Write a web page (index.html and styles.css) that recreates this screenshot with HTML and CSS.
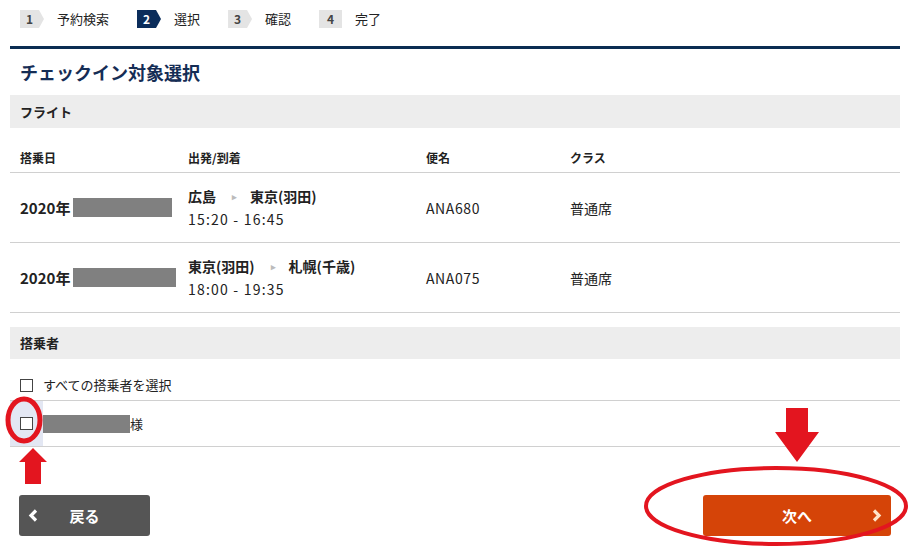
FILE: index.html
```html
<!DOCTYPE html>
<html lang="ja">

<head>
    <meta charset="UTF-8">
    <title>チェックイン対象選択</title>
    <link rel="stylesheet" href="styles.css">
</head>

<body>
    <div class="page">

        <ol class="steps">
            <li><span class="num">1</span><span class="label">予約検索</span></li>
            <li class="active"><span class="num">2</span><span class="label">選択</span></li>
            <li><span class="num">3</span><span class="label">確認</span></li>
            <li class="last"><span class="num">4</span><span class="label">完了</span></li>
        </ol>

        <h1 class="title">チェックイン対象選択</h1>

        <h2 class="section-head">フライト</h2>
        <div class="flights">
            <div class="row head">
                <div>搭乗日</div>
                <div>出発/到着</div>
                <div>便名</div>
                <div>クラス</div>
            </div>
            <div class="row">
                <div class="date">2020年<span class="mask" style="width: 99px"></span></div>
                <div>
                    <div class="route">広島<span class="tri">&#9656;</span>東京(羽田)</div>
                    <div class="time">15:20 - 16:45</div>
                </div>
                <div class="code">ANA680</div>
                <div>普通席</div>
            </div>
            <div class="row">
                <div class="date">2020年<span class="mask" style="width: 103px"></span></div>
                <div>
                    <div class="route">東京(羽田)<span class="tri">&#9656;</span>札幌(千歳)</div>
                    <div class="time">18:00 - 19:35</div>
                </div>
                <div class="code">ANA075</div>
                <div>普通席</div>
            </div>
        </div>

        <h2 class="section-head second">搭乗者</h2>
        <div class="check-all">
            <span class="box"></span>すべての搭乗者を選択
        </div>
        <div class="passenger">
            <div class="pick"><span class="box"></span></div>
            <span class="mask" style="width: 87px"></span>様
        </div>

        <div class="buttons">
            <a class="btn back" href="#">
                <svg class="chev" width="10" height="13" viewBox="0 0 10 13">
                    <polyline points="8,1.5 3,6.5 8,11.5" fill="none" stroke="#fff" stroke-width="3.2" />
                </svg>戻る</a>
            <a class="btn next" href="#">次へ<svg class="chev" width="10" height="13" viewBox="0 0 10 13">
                    <polyline points="2,1.5 7,6.5 2,11.5" fill="none" stroke="#ffe4c8" stroke-width="3.2" />
                </svg></a>
        </div>

        <!-- 赤い注釈 -->
        <svg class="marks" width="908" height="549" viewBox="0 0 908 549">
            <ellipse cx="24" cy="420" rx="16" ry="21" fill="none" stroke="#e3151f" stroke-width="5" />
            <polygon points="33,448 47,462 41,462 41,484 25,484 25,462 19,462" fill="#e3151f" />
            <polygon points="786,408 808,408 808,432 819,432 797,462 775,432 786,432" fill="#e3151f" />
            <ellipse cx="776" cy="506" rx="130" ry="38" fill="none" stroke="#e3151f" stroke-width="4" />
        </svg>
    </div>
</body>

</html>
```

FILE: styles.css
```css
body {
    margin: 0;
    font-family: "Noto Sans CJK JP", "Noto Sans", sans-serif;
    color: #222;
    background-color: #fff;
}

.page {
    position: relative;
    width: 890px;
    height: 549px;
    padding: 0 8px 0 10px;
}

/* ステップ */
.steps {
    list-style: none;
    margin: 0;
    padding: 10px 0 0 10px;
    display: flex;
    gap: 28px;
    height: 18px;
}

.steps li {
    display: flex;
    align-items: center;
}

.steps .num {
    width: 24px;
    height: 18px;
    line-height: 18px;
    padding-right: 5px;
    box-sizing: border-box;
    text-align: center;
    font-size: 12px;
    font-weight: bold;
    color: #444;
    background-color: #e4e4e4;
    clip-path: polygon(0 0, 19px 0, 24px 50%, 19px 100%, 0 100%);
}

.steps .active .num {
    background-color: #0b2d5b;
    color: #fff;
}

.steps .last .num {
    width: 23px;
    padding-right: 0;
    clip-path: none;
}

.steps .label {
    margin-left: 13px;
    font-size: 13px;
    line-height: 18px;
}

.title {
    margin: 18px 0 0;
    border-top: 3px solid #0b2d52;
    padding-left: 10px;
    line-height: 46px;
    font-size: 18px;
    font-weight: bold;
    color: #152d55;
}

.section-head {
    margin: 0;
    height: 33px;
    line-height: 33px;
    padding-left: 10px;
    font-size: 13px;
    font-weight: bold;
    background-color: #ededed;
}

.section-head.second {
    margin-top: 14px;
    height: 32px;
    line-height: 32px;
}

/* フライト一覧 */
.row {
    display: grid;
    grid-template-columns: 168px 238px 144px 1fr;
    align-items: center;
    height: 69px;
    border-bottom: 1px solid #d0d0d0;
    font-size: 14px;
}

.row > div {
    padding-left: 10px;
}

.row.head {
    height: 45px;
    align-items: start;
    padding-top: 22px;
    box-sizing: border-box;
    line-height: 16px;
    font-size: 12px;
    font-weight: bold;
}

.date {
    font-weight: bold;
    font-size: 15px;
    display: flex;
    align-items: center;
}

.date .mask {
    margin-left: 3px;
}

.mask {
    display: inline-block;
    height: 19px;
    background-color: #808080;
}

.route {
    font-weight: bold;
    line-height: 23px;
}

.tri {
    color: #bbb;
    font-size: 9px;
    margin: 0 13px 0 16px;
    vertical-align: 2px;
}

.time {
    line-height: 23px;
    letter-spacing: 1.2px;
}

.code {
    letter-spacing: 0.6px;
}

/* 搭乗者 */
.box {
    display: inline-block;
    width: 11px;
    height: 11px;
    border: 1px solid #444;
    background-color: #fff;
}

.check-all {
    display: flex;
    align-items: center;
    gap: 10px;
    padding: 18px 0 7px 10px;
    line-height: 16px;
    font-size: 13px;
    border-bottom: 1px solid #d0d0d0;
}

.passenger {
    display: flex;
    align-items: center;
    height: 45px;
    font-size: 13px;
    border-bottom: 1px solid #d0d0d0;
}

.pick {
    width: 33px;
    height: 45px;
    padding-left: 10px;
    box-sizing: border-box;
    display: flex;
    align-items: center;
    background-color: #e3e7f3;
}

.passenger .mask {
    height: 18px;
}

/* ボタン */
.buttons {
    display: flex;
    justify-content: space-between;
    margin-top: 48px;
    padding: 0 9px 0 9px;
}

.btn {
    position: relative;
    height: 41px;
    line-height: 41px;
    border-radius: 3px;
    color: #fff;
    font-size: 15px;
    font-weight: bold;
    text-decoration: none;
    text-align: center;
    box-sizing: border-box;
}

.btn .chev {
    position: absolute;
    top: 14px;
}

.back {
    width: 131px;
    background-color: #555;
}

.back .chev {
    left: 9px;
}

.next {
    width: 188px;
    background-color: #d54408;
}

.next .chev {
    right: 9px;
}

.marks {
    position: absolute;
    top: 0;
    left: 0;
    pointer-events: none;
}
```
